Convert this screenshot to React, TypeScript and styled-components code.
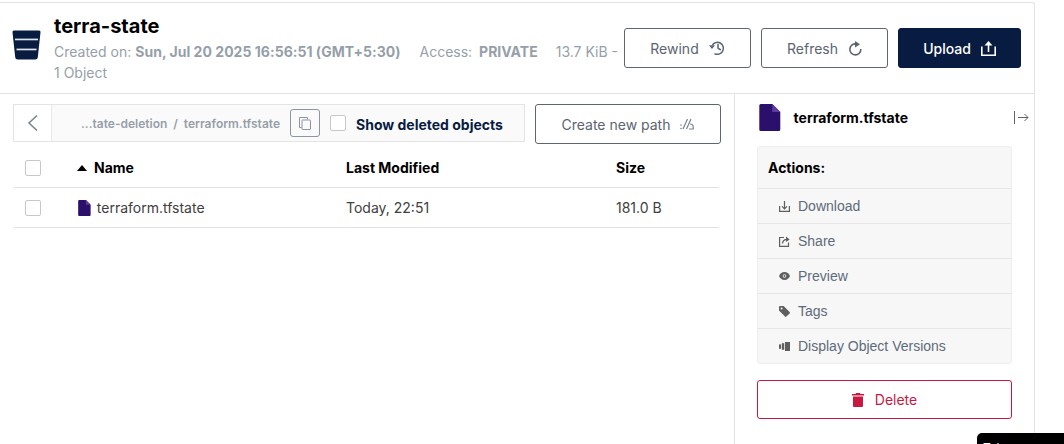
import styled, { createGlobalStyle } from "styled-components";
import { ReactNode } from "react";

const GlobalStyle = createGlobalStyle`
  html, body {
    margin: 0;
    padding: 0;
    background: #fff;
    overflow: hidden;
  }
  body {
    font-family: "Inter", "Liberation Sans", sans-serif;
    height: 444px;
    position: relative;
  }
  * {
    box-sizing: border-box;
  }
`;

const BucketIcon = () => (
  <svg width="30" height="30" viewBox="0 0 30 30">
    <path
      d="M2 .5h25a1.500 1.500 0 0 1 1.500 1.700l-2.700 25a2.500 2.500 0 0 1-2.500 2.300H5.700a2.500 2.500 0 0 1-2.500-2.300L.5 2.200A1.500 1.500 0 0 1 2 .5z"
      fill="#081c42"
    />
    <rect x="3" y="8.600" width="23" height="1.700" fill="#dfe3ea" />
    <rect x="4.500" y="18.600" width="20" height="1.700" fill="#dfe3ea" />
  </svg>
);

const FileIcon = ({ size }: { size: number }) => (
  <svg width={size * 0.8} height={size} viewBox="0 0 21 27">
    <path d="M1.500 0H13l8 8v17.500a1.500 1.500 0 0 1-1.500 1.500h-18A1.500 1.500 0 0 1 0 25.500v-24A1.500 1.500 0 0 1 1.500 0z" fill="#2a0f6b" />
    <path d="M13 0l8 8h-8z" fill="#5b3d9c" />
  </svg>
);

const RewindIcon = () => (
  <svg width="16" height="16" viewBox="0 0 16 16" fill="none" stroke="#5a6472" strokeWidth="1.500">
    <path d="M3.400 5A6 6 0 1 1 5.500 13.600" />
    <path d="M0 5.200h6L3 9z" fill="#5a6472" stroke="none" />
    <path d="M9 3.800v4.400l2.800 1.800" />
  </svg>
);

const RefreshIcon = () => (
  <svg width="14" height="15" viewBox="0 0 14 15" fill="none" stroke="#5a6472" strokeWidth="1.600">
    <path d="M8.400 3A5.500 5.500 0 1 0 12.800 8" />
    <path d="M7 0l5 3.200L7 6.400z" fill="#5a6472" stroke="none" />
  </svg>
);

const UploadIcon = () => (
  <svg width="15" height="16" viewBox="0 0 15 16" fill="none" stroke="#fff" strokeWidth="1.600">
    <path d="M.8 6.500v8.700h13.400V6.500" />
    <path d="M7.500 12V3" />
    <path d="M3.500 5.600h8L7.500 1z" fill="#fff" stroke="none" />
  </svg>
);

const BackIcon = () => (
  <svg width="12" height="18" viewBox="0 0 12 18" fill="none" stroke="#7c8590" strokeWidth="1.600">
    <path d="M10 1.500L2 9l8 7.500" />
  </svg>
);

const CopyIcon = () => (
  <svg width="12" height="13" viewBox="0 0 12 13" fill="none" stroke="#8c96a3" strokeWidth="1">
    <rect x="3" y="3" width="8.500" height="9.500" rx="0.500" />
    <path d="M2.500 10.500H.5V.5h8v2" />
  </svg>
);

const PathIcon = () => (
  <svg width="14" height="12" viewBox="0 0 14 12" fill="none" stroke="#7d848e" strokeWidth="1.200">
    <circle cx="1" cy="7" r="0.800" fill="#7d848e" stroke="none" />
    <circle cx="1" cy="10.500" r="0.800" fill="#7d848e" stroke="none" />
    <path d="M3 11L7.500 1M6.500 11L11 1" />
    <path d="M10 6c2.500 0 3.500 1.500 3.200 5H9" />
  </svg>
);

const DownloadIcon = () => (
  <svg width="11" height="11" viewBox="0 0 11 11" fill="none" stroke="#5f5f5f" strokeWidth="1.200">
    <path d="M.6 5v5.400h9.800V5" />
    <path d="M5.500 0v7.500" />
    <path d="M3 5.400l2.500 2.500L8 5.400" />
  </svg>
);

const ShareIcon = () => (
  <svg width="11" height="11" viewBox="0 0 11 11" fill="none" stroke="#5f5f5f" strokeWidth="1.200">
    <path d="M5 1.500H.6v8.900h8.900V6.500" />
    <path d="M3.500 7.500C3.800 4.800 5.500 3.400 8 3.400" />
    <path d="M7 .6l3.600 2.800L7 6z" fill="#5f5f5f" stroke="none" />
  </svg>
);

const EyeIcon = () => (
  <svg width="11" height="8" viewBox="0 0 11 8">
    <path d="M5.500 0C8.200 0 10.200 2 11 4c-.8 2-2.800 4-5.500 4S.8 6 0 4C.8 2 2.800 0 5.500 0z" fill="#5f5f5f" />
    <circle cx="5.500" cy="4" r="1.800" fill="#f7f7f7" />
    <circle cx="5.500" cy="4" r="1" fill="#5f5f5f" />
  </svg>
);

const TagIcon = () => (
  <svg width="11" height="11" viewBox="0 0 11 11">
    <path d="M0 1a1 1 0 0 1 1-1h3.600l6 6a1 1 0 0 1 0 1.400l-3.200 3.200a1 1 0 0 1-1.400 0l-6-6zM2.600 1.600a1 1 0 1 0 0 2 1 1 0 0 0 0-2z" fill="#5f5f5f" fillRule="evenodd" />
  </svg>
);

const VersionsIcon = () => (
  <svg width="11" height="9" viewBox="0 0 11 9" fill="#5f5f5f">
    <rect x="0" y="2.400" width="2" height="4.400" />
    <rect x="2.800" y="1.200" width="2.400" height="6.600" />
    <rect x="6" y="0" width="5" height="9" />
  </svg>
);

const TrashIcon = () => (
  <svg width="12" height="14" viewBox="0 0 12 14" fill="#c8183f">
    <path d="M4 0h4l.5 1H12v1.600H0V1h3.500zM1 3.600h10V13a1 1 0 0 1-1 1H2a1 1 0 0 1-1-1z" />
  </svg>
);

const CollapseIcon = () => (
  <svg width="15" height="13" viewBox="0 0 15 13" fill="none" stroke="#5f6670" strokeWidth="1">
    <path d="M.5 0v13" />
    <path d="M4 6.500h10" />
    <path d="M10.500 3l3.500 3.500L10.500 10" />
  </svg>
);

const Page = styled.div`
  width: 1035px;
  height: 444px;
  margin-top: 2px;
  border-top: 1px solid #e2e2e2;
  border-right: 1px solid #e2e2e2;
  border-top-right-radius: 3px;
`;

const Header = styled.header`
  height: 91px;
  border-bottom: 1px solid #e2e2e2;
  display: flex;
  align-items: flex-start;
  padding: 11px 13px 0 12px;
`;

const BucketSlot = styled.div`
  width: 42px;
  padding-top: 16px;
  flex: none;
`;

const TitleBlock = styled.div`
  width: 570px;
  flex: none;
`;

const Title = styled.h1`
  margin: 0 0 3px;
  font-size: 20px;
  line-height: 24px;
  font-weight: 700;
  color: #000;
`;

const Meta = styled.div`
  font-size: 14px;
  line-height: 21px;
  color: #969fa9;
  white-space: nowrap;
`;

const MetaItem = styled.span<{ $gap?: number; $tag?: boolean }>`
  margin-right: ${(p) => p.$gap ?? 0}px;

  b {
    font-weight: 700;
    letter-spacing: ${(p) => (p.$tag ? 0 : 0.03)}px;
    margin-left: ${(p) => (p.$tag ? 3 : 0)}px;
  }
`;

const HeaderActions = styled.div`
  display: flex;
  gap: 10px;
  padding-top: 14px;
  margin-left: auto;
`;

const Button = styled.button<{ $w: number; $primary?: boolean }>`
  width: ${(p) => p.$w}px;
  height: 40px;
  display: flex;
  align-items: center;
  justify-content: center;
  gap: 10px;
  border-radius: 3px;
  border: 1px solid ${(p) => (p.$primary ? "#081c42" : "#5f6670")};
  background: ${(p) => (p.$primary ? "#081c42" : "#fff")};
  color: ${(p) => (p.$primary ? "#fff" : "#5a6472")};
  font-family: inherit;
  font-size: 14px;
  font-weight: ${(p) => (p.$primary ? 500 : 400)};
  padding: 0;
`;

const Body = styled.div`
  display: flex;
  height: 350px;
`;

const Main = styled.main`
  width: 734px;
  flex: none;
  padding: 10px 13px 0 13px;
`;

const Toolbar = styled.div`
  display: flex;
  gap: 10px;
`;

const PathBar = styled.div`
  width: 512px;
  height: 38px;
  flex: none;
  display: flex;
  align-items: center;
  border: 1px solid #e4e4e4;
  background: #fafafa;
`;

const BackButton = styled.div`
  width: 38px;
  height: 100%;
  flex: none;
  display: flex;
  align-items: center;
  justify-content: center;
  background: #fff;
  border-right: 1px solid #e8e8e8;
`;

const Crumbs = styled.div`
  width: 228px;
  flex: none;
  display: flex;
  justify-content: flex-end;
  gap: 6px;
  font-size: 12px;
  font-weight: 600;
  color: #969fa9;
  white-space: nowrap;
`;

const CopyButton = styled.div`
  width: 30px;
  height: 28px;
  margin-left: 10px;
  flex: none;
  display: flex;
  align-items: center;
  justify-content: center;
  border: 1px solid #8c96a3;
  border-radius: 3px;
`;

const Check = styled.span<{ $m?: number }>`
  display: block;
  width: 16px;
  height: 16px;
  flex: none;
  margin-left: ${(p) => p.$m ?? 0}px;
  border: 1px solid #c8c8c8;
  border-radius: 2px;
  background: #fff;
`;

const DeletedLabel = styled.span`
  margin-left: 10px;
  padding-top: 2px;
  font-size: 14px;
  font-weight: 700;
  color: #081c42;
  white-space: nowrap;
`;

const Row = styled.div<{ $head?: boolean }>`
  display: grid;
  grid-template-columns: 63px 269px 270px 1fr;
  align-items: center;
  width: 705px;
  margin-left: 1px;
  height: ${(p) => (p.$head ? 44 : 40)}px;
  padding-top: ${(p) => (p.$head ? 4 : 0)}px;
  border-bottom: 1px solid #e2e2e2;
  font-size: 14px;
  color: ${(p) => (p.$head ? "#000" : "#404040")};
  font-weight: ${(p) => (p.$head ? 700 : 400)};
`;

const CheckCell = styled.div`
  padding-left: 11px;
`;

const NameCell = styled.div<{ $file?: boolean }>`
  display: flex;
  align-items: center;
  gap: ${(p) => (p.$file ? 6 : 7)}px;
  padding-left: ${(p) => (p.$file ? 1 : 0)}px;
`;

const SortArrow = styled.span`
  width: 0;
  height: 0;
  border-left: 5.5px solid transparent;
  border-right: 5.5px solid transparent;
  border-bottom: 6px solid #000;
`;

const Side = styled.aside`
  flex: 1;
  border-left: 1px solid #e2e2e2;
  padding: 0 0 0 22px;
`;

const SideHead = styled.div`
  height: 52px;
  display: flex;
  align-items: center;
  padding: 0 5px 6px 2px;
`;

const SideTitle = styled.span`
  margin-left: 13px;
  font-size: 14px;
  font-weight: 700;
  color: #000;
  flex: 1;
`;

const ActionsBox = styled.div`
  width: 255px;
  background: #f7f7f7;
  border: 1px solid #eeeeee;
  border-radius: 3px;
`;

const ActionsTitle = styled.div`
  height: 41px;
  display: flex;
  align-items: center;
  padding-left: 10px;
  font-size: 14px;
  font-weight: 700;
  color: #000;
`;

const ActionRow = styled.div`
  height: 35px;
  display: flex;
  align-items: center;
  border-top: 1px solid #e6e6e6;
  padding-left: 21px;
  font-family: "Liberation Sans", Arial, sans-serif;
  font-size: 14px;
  color: #5e6b7a;
`;

const ActionIcon = styled.span`
  width: 19px;
  display: flex;
  align-items: center;
`;

const DeleteButton = styled.button`
  width: 255px;
  height: 39px;
  margin-top: 16px;
  display: flex;
  align-items: center;
  justify-content: center;
  gap: 11px;
  background: #fff;
  border: 1px solid #c8183f;
  border-radius: 3px;
  color: #c8183f;
  font-family: inherit;
  font-size: 14px;
  font-weight: 400;
`;

const Toast = styled.div`
  position: absolute;
  left: 977px;
  top: 433px;
  width: 120px;
  height: 30px;
  padding: 7px 6px;
  background: #000;
  border-radius: 5px;
  color: #fff;
  font-size: 12px;
  white-space: nowrap;
`;

const actions: { icon: ReactNode; label: string }[] = [
  { icon: <DownloadIcon />, label: "Download" },
  { icon: <ShareIcon />, label: "Share" },
  { icon: <EyeIcon />, label: "Preview" },
  { icon: <TagIcon />, label: "Tags" },
  { icon: <VersionsIcon />, label: "Display Object Versions" },
];

const App = () => {
  return (
    <>
      <GlobalStyle />
      <Page>
        <Header>
          <BucketSlot>
            <BucketIcon />
          </BucketSlot>
          <TitleBlock>
            <Title>terra-state</Title>
            <Meta>
              <MetaItem $gap={19}>
                Created on: <b>Sun, Jul 20 2025 16:56:51 (GMT+5:30)</b>
              </MetaItem>
              <MetaItem $gap={18} $tag>
                Access: <b>PRIVATE</b>
              </MetaItem>
              <MetaItem>13.7 KiB -</MetaItem>
            </Meta>
            <Meta>1 Object</Meta>
          </TitleBlock>
          <HeaderActions>
            <Button $w={127}>
              Rewind <RewindIcon />
            </Button>
            <Button $w={127}>
              Refresh <RefreshIcon />
            </Button>
            <Button $w={123} $primary>
              Upload <UploadIcon />
            </Button>
          </HeaderActions>
        </Header>
        <Body>
          <Main>
            <Toolbar>
              <PathBar>
                <BackButton>
                  <BackIcon />
                </BackButton>
                <Crumbs>
                  <span>...tate-deletion</span>
                  <span>/</span>
                  <span>terraform.tfstate</span>
                </Crumbs>
                <CopyButton>
                  <CopyIcon />
                </CopyButton>
                <Check $m={10} />
                <DeletedLabel>Show deleted objects</DeletedLabel>
              </PathBar>
              <Button $w={186}>
                Create new path <PathIcon />
              </Button>
            </Toolbar>
            <Row $head>
              <CheckCell>
                <Check />
              </CheckCell>
              <NameCell>
                <SortArrow />
                Name
              </NameCell>
              <div>Last Modified</div>
              <div>Size</div>
            </Row>
            <Row>
              <CheckCell>
                <Check />
              </CheckCell>
              <NameCell $file>
                <FileIcon size={16} />
                terraform.tfstate
              </NameCell>
              <div>Today, 22:51</div>
              <div>181.0 B</div>
            </Row>
          </Main>
          <Side>
            <SideHead>
              <FileIcon size={27} />
              <SideTitle>terraform.tfstate</SideTitle>
              <CollapseIcon />
            </SideHead>
            <ActionsBox>
              <ActionsTitle>Actions:</ActionsTitle>
              {actions.map((a) => (
                <ActionRow key={a.label}>
                  <ActionIcon>{a.icon}</ActionIcon>
                  {a.label}
                </ActionRow>
              ))}
            </ActionsBox>
            <DeleteButton>
              <TrashIcon />
              Delete
            </DeleteButton>
          </Side>
        </Body>
      </Page>
      <Toast>Take a screenshot</Toast>
    </>
  );
};

export default App;
